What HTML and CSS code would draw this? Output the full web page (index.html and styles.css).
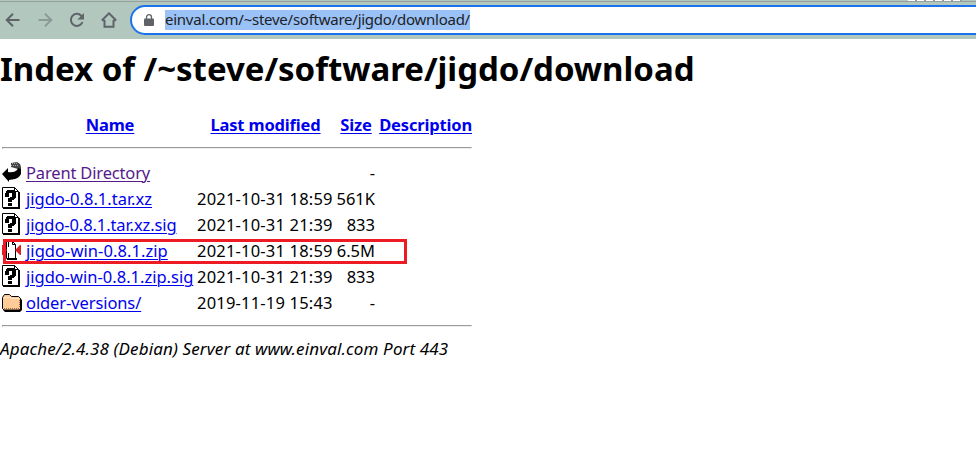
FILE: index.html
```html
<!DOCTYPE html>
<html lang="en">
<head>
<meta charset="utf-8">
<title>Index of /~steve/software/jigdo/download</title>
<link rel="stylesheet" href="styles.css">
</head>
<body>
<svg class="defs" width="0" height="0" aria-hidden="true">
  <symbol id="unknown" viewBox="0 0 20 22">
    <path fill="#fff" stroke="#000" d="M.5.5h12l4 4v16H.5z"/>
    <path fill="none" stroke="#000" d="M12.500.5v4h4"/>
    <path fill="#000" d="M16 5h2v17H1v-2h15z"/>
    <path fill="#000" d="M3 6h1V4h1V3h7v1h1v1h1v6h-1v1h-1v1h-2v2H6v-4h2v-1h2V6H7v4H3zM6 16h4v3H6z"/>
  </symbol>
</svg>
<header class="toolbar">
  <span class="tab-edge"></span>
  <nav class="nav">
    <svg width="16" height="16" viewBox="0 0 16 16"><path class="ico" d="M14.500 8H2M8 1.700 1.700 8 8 14.300"/></svg>
    <svg class="dim" width="16" height="16" viewBox="0 0 16 16"><path class="ico" d="M1.500 8H14M8 1.700 14.300 8 8 14.300"/></svg>
    <svg width="16" height="16" viewBox="0 0 16 16"><path class="ico" d="M13.500 10A6 6 0 1 1 12.300 3.800L14 5.500"/><path fill="#5f6468" d="M15 1v6.500H8.500z"/></svg>
    <svg width="16" height="16" viewBox="0 0 16 16"><path class="ico" d="M3.500 8v6.800h9V8M.8 8.500 8 1.300l7.200 7.200M1 8.200h2.500M12.500 8.200H15"/></svg>
  </nav>
  <div class="address">
    <svg width="10" height="13" viewBox="0 0 10 13"><path fill="#5f6368" d="M1 4.500h8q1 0 1 1V11q0 1-1 1H1q-1 0-1-1V5.500q0-1 1-1z"/><path fill="none" stroke="#5f6368" stroke-width="1.300" d="M2.500 5V3.200a2.500 2.500 0 0 1 5 0V5"/></svg>
    <span class="url">einval.com/~steve/software/jigdo/download/</span>
  </div>
</header>
<main>
  <h1><span>Index of /~steve/software/jigdo/download</span></h1>
  <div class="listing">
    <div class="row head"><span></span><a href="#" class="c1">Name</a><a href="#" class="c2">Last modified</a><a href="#" class="c3">Size</a><a href="#" class="c4">Description</a></div>
    <hr>
    <div class="row">
      <svg width="20" height="22" viewBox="0 0 20 22"><path fill="#444" d="M9 2l6-1 3 2 1 3v5h-2l-1-3-7-2z"/><path fill="#000" d="M0 13l6-6v4q6 1 9-2l1-2 3 1v5q-2 4-6 5l-6 1v2z"/><path stroke="#aaa" stroke-dasharray="1 1" d="M10 2.500h6M9 4.500h8"/></svg>
      <a href="#" class="visited n0">Parent Directory</a><span></span><span class="size">-</span>
    </div>
    <div class="row">
      <svg width="20" height="22"><use href="#unknown"/></svg>
      <a href="#" class="n1">jigdo-0.8.1.tar.xz</a><span class="date">2021-10-31 18:59</span><span class="size">561K</span>
    </div>
    <div class="row">
      <svg width="20" height="22"><use href="#unknown"/></svg>
      <a href="#" class="n2">jigdo-0.8.1.tar.xz.sig</a><span class="date">2021-10-31 21:39</span><span class="size">833</span>
    </div>
    <div class="row marked">
      <svg width="20" height="22" viewBox="0 0 20 22"><path fill="#fff" stroke="#000" d="M4.500 2.500h6l3 3v14h-9z"/><path fill="none" stroke="#000" d="M10.500 2.500v3h3M6.500 3v5M6.500 14v5"/><path fill="#000" d="M5 19h10v2H5z"/><path fill="#d8232a" d="M0 6h1l4 5-4 5H0zM19 6h-1l-5 5 5 5h1z"/></svg>
      <a href="#" class="n3">jigdo-win-0.8.1.zip</a><span class="date">2021-10-31 18:59</span><span class="size">6.5M</span>
    </div>
    <div class="row">
      <svg width="20" height="22"><use href="#unknown"/></svg>
      <a href="#" class="n4">jigdo-win-0.8.1.zip.sig</a><span class="date">2021-10-31 21:39</span><span class="size">833</span>
    </div>
    <div class="row">
      <svg width="20" height="22" viewBox="0 0 20 22"><path fill="#000" d="M3 7h15l2 2v10l-2 2H3l-2-2z"/><path fill="#fc9" stroke="#000" d="M.5 6.500l2-3h5l2 2h7l2 2v10l-1 1.500H2L.5 17.500z"/><path fill="none" stroke="#ffe8cf" d="M2 6.500h6l2 1h7"/><path stroke="#a66a35" stroke-dasharray="1 1" d="M2 17.500h15M17.500 9v8"/></svg>
      <a href="#" class="n5">older-versions/</a><span class="date">2019-11-19 15:43</span><span class="size">-</span>
    </div>
    <hr>
  </div>
  <address class="server"><span>Apache/2.4.38 (Debian) Server at www.einval.com Port 443</span></address>
</main>
</body>
</html>
```
FILE: styles.css
```css
*, ::after { box-sizing: border-box; }
body { margin: 0; background: #fff; color: #000; font: 16.5px/26px "Noto Sans", "Open Sans", sans-serif; height: 468px; overflow: hidden; }
.defs { display: block; width: 0; height: 0; }
.toolbar { position: relative; display: flex; align-items: flex-start; height: 39px; padding-top: 4px; background: #b2c8bf; border-top: 1px solid #b2c8bf; box-shadow: inset 0 1px #949e9a; }
.tab-edge { position: absolute; left: 908px; top: -1px; width: 54px; height: 1px; background: repeating-linear-gradient(90deg, #fff 0 7px, #999 7px 9px); }
.nav { display: flex; gap: 16px; width: 130px; padding: 7px 0 0 5px; }
.ico { fill: none; stroke: #5f6468; stroke-width: 2; }
.dim { opacity: .45; }
.address { display: flex; align-items: center; flex: 1; height: 30px; margin-right: -20px; padding-left: 12px; background: #fff; border: 2px solid #1a73e8; border-radius: 15px; }
.url { height: 20px; margin-left: 11px; background: #9ac2f7; color: #202124; font-size: 15px; line-height: 19px; letter-spacing: -.25px; white-space: nowrap; }
h1 { margin: 8px 0 0; height: 44px; font-size: 33px; line-height: 43px; letter-spacing: -.03px; white-space: nowrap; }
.listing { width: 470px; margin: 21px 0 0 2px; }
.row { display: grid; grid-template-columns: 24px 171px 137px 41px 97px; height: 26px; align-items: center; white-space: nowrap; }
.row > * { justify-self: start; }
.row svg { display: block; position: relative; top: -1px; }
.head { font-weight: 700; letter-spacing: -.16px; }
.head > a { justify-self: center; }
.head > .c3 { margin-left: 3px; }
.head > .c4 { justify-self: end; }
.head .c1 { margin-right: 3px; }
a { color: #00e; text-decoration: underline; text-decoration-thickness: 1px; text-underline-offset: 2px; }
.visited { color: #551a8b; }
.date { letter-spacing: .19px; }
.n0 { letter-spacing: -.16px; }
.n2 { letter-spacing: -.1px; }
.n3 { letter-spacing: .06px; }
.n5 { letter-spacing: -.1px; }
.row > .size { justify-self: end; }
hr { height: 2px; margin: 9px 0 11px; border: 1px solid; border-color: #9a9a9a #eee #eee #9a9a9a; }
.marked { position: relative; }
.marked::after { content: ""; position: absolute; left: 1px; top: 1px; width: 404px; height: 25px; border: 3px solid #ed1c24; }
.server { margin-top: -2px; font-size: 17px; letter-spacing: .13px; font-style: italic; white-space: nowrap; }
```
